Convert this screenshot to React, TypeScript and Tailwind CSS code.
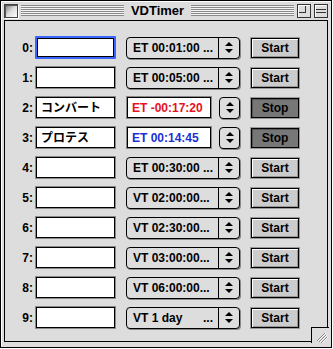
const FONT = { fontFamily: '"Liberation Sans", Arial, sans-serif' };
const JP = { fontFamily: '"Liberation Sans", "Noto Sans CJK JP", sans-serif' };

type Row = {
  name: string;
  mode: "popup" | "run";
  text: string;
  tail?: boolean;
  color?: string;
  running?: boolean;
};

const rows: Row[] = [
  { name: "", mode: "popup", text: "ET 00:01:00 ..." },
  { name: "", mode: "popup", text: "ET 00:05:00 ..." },
  { name: "コンバート", mode: "run", text: "ET -00:17:20", color: "text-[#e8101c]", running: true },
  { name: "プロテス", mode: "run", text: "ET 00:14:45", color: "text-[#1a2fd6]", running: true },
  { name: "", mode: "popup", text: "ET 00:30:00 ..." },
  { name: "", mode: "popup", text: "VT 02:00:00..." },
  { name: "", mode: "popup", text: "VT 02:30:00..." },
  { name: "", mode: "popup", text: "VT 03:00:00..." },
  { name: "", mode: "popup", text: "VT 06:00:00..." },
  { name: "", mode: "popup", text: "VT 1 day", tail: true },
];

function Arrows() {
  return (
    <svg width="8" height="11" viewBox="0 0 8 11">
      <path d="M4 0 L8 4 L0 4 Z" fill="black" />
      <path d="M0 7 L8 7 L4 11 Z" fill="black" />
    </svg>
  );
}

function TextField({ value, focused }: { value: string; focused?: boolean }) {
  return (
    <div
      className={
        focused
          ? "w-[81px] h-[23px] border-2 border-[#3a66ff] rounded-[1px]"
          : "w-[81px] h-[23px] border border-[#8a8a8a]"
      }
    >
      <div
        className="w-full h-full bg-white border border-black flex items-center pl-[4px] text-[12px] font-bold text-black"
        style={JP}
      >
        {value}
      </div>
    </div>
  );
}

function Popup({ text, tail }: { text: string; tail?: boolean }) {
  return (
    <div className="w-[114px] h-[22px] rounded-[4px] border border-black bg-[#dddddd] flex shadow-[1px_1px_0_#888]">
      <div className="flex-1 flex items-center justify-between pl-[6px] pr-[5px] text-[12px] font-bold text-black whitespace-nowrap" style={FONT}>
        <span>{text}</span>
        {tail && <span>...</span>}
      </div>
      <div className="w-[21px] border-l border-black flex items-center justify-center">
        <Arrows />
      </div>
    </div>
  );
}

function Stepper() {
  return (
    <div className="w-[21px] h-[22px] rounded-[4px] border border-black bg-[#dddddd] flex items-center justify-center shadow-[1px_1px_0_#888]">
      <Arrows />
    </div>
  );
}

function Button({ label, pressed }: { label: string; pressed?: boolean }) {
  return (
    <div className="w-[50px] h-[22px] border border-[#9a9a9a]">
      <div
        className={
          pressed
            ? "w-full h-full border border-black bg-[#777777] flex items-center justify-center text-[12px] font-bold text-black shadow-[inset_1px_1px_0_#555]"
            : "w-full h-full border border-black bg-[#cccccc] flex items-center justify-center text-[12px] font-bold text-black shadow-[inset_1px_1px_0_#fff,inset_-1px_-1px_0_#999]"
        }
        style={FONT}
      >
        {label}
      </div>
    </div>
  );
}

export default function App() {
  return (
    <div className="w-[333px] h-[349px] bg-white">
      <div className="relative w-[332px] h-[348px] border border-black bg-[#dddddd] flex flex-col shadow-[inset_1px_1px_0_#fff]">
        {/* title bar */}
        <div className="h-[19px] flex items-center px-[3px] gap-[3px]">
          <div className="w-[14px] h-[14px] border border-[#444] bg-gradient-to-br from-[#777] via-[#ddd] to-[#fff] shadow-[inset_1px_1px_0_#555,1px_1px_0_#fff]" />
          <div className="flex-1 h-[11px] bg-[repeating-linear-gradient(to_bottom,#8a8a8a_0px,#8a8a8a_1px,#f4f4f4_1px,#f4f4f4_2px)]" />
          <div className="px-[4px] text-[13px] font-bold text-black leading-none" style={FONT}>
            VDTimer
          </div>
          <div className="flex-1 h-[11px] bg-[repeating-linear-gradient(to_bottom,#8a8a8a_0px,#8a8a8a_1px,#f4f4f4_1px,#f4f4f4_2px)]" />
          <div className="w-[14px] h-[14px] border border-[#333] bg-[#dddddd] relative shadow-[inset_1px_1px_0_#fff]">
            <div className="absolute left-[1px] top-[1px] w-[7px] h-[7px] border-r border-b border-[#333]" />
          </div>
          <div className="w-[14px] h-[14px] border border-[#333] bg-[#dddddd] flex flex-col justify-center gap-[2px] px-[1px] shadow-[inset_1px_1px_0_#fff]">
            <div className="h-px bg-[#333]" />
            <div className="h-px bg-[#333]" />
          </div>
        </div>

        {/* content */}
        <div className="mx-[3px] mb-[5px] flex-1 border border-black bg-[#dddddd] flex flex-col pt-[15px] gap-[7px]">
          {rows.map((r, i) => (
            <div key={i} className="h-[23px] flex items-center">
              <div className="w-[28px] text-right text-[12px] font-bold text-black" style={FONT}>
                {i}:
              </div>
              <div className="ml-[2px]">
                <TextField value={r.name} focused={i === 0} />
              </div>
              <div className="ml-[10px] flex items-center">
                {r.mode === "popup" ? (
                  <Popup text={r.text} tail={r.tail} />
                ) : (
                  <div className="flex items-center gap-[7px]">
                    <div className="w-[86px] h-[23px] border border-[#8a8a8a]">
                      <div
                        className={`w-full h-full bg-white border border-black flex items-center pl-[4px] text-[12px] font-bold ${r.color}`}
                        style={FONT}
                      >
                        {r.text}
                      </div>
                    </div>
                    <Stepper />
                  </div>
                )}
              </div>
              <div className="ml-[10px]">
                <Button label={r.running ? "Stop" : "Start"} pressed={r.running} />
              </div>
            </div>
          ))}
        </div>

        {/* grow box */}
        <div className="absolute right-[2px] bottom-[4px] w-[18px] h-[16px] bg-[#dddddd] border-l border-t border-black">
          <svg width="16" height="14" viewBox="0 0 16 14" className="absolute right-[1px] bottom-[0px]">
            <path d="M5 12 L13 4 M7 13 L14 6 M9 14 L15 8" stroke="#888" strokeWidth="1" />
            <path d="M6 12 L14 4 M8 13 L15 6 M10 14 L16 8" stroke="#fff" strokeWidth="1" />
          </svg>
        </div>
      </div>
    </div>
  );
}
